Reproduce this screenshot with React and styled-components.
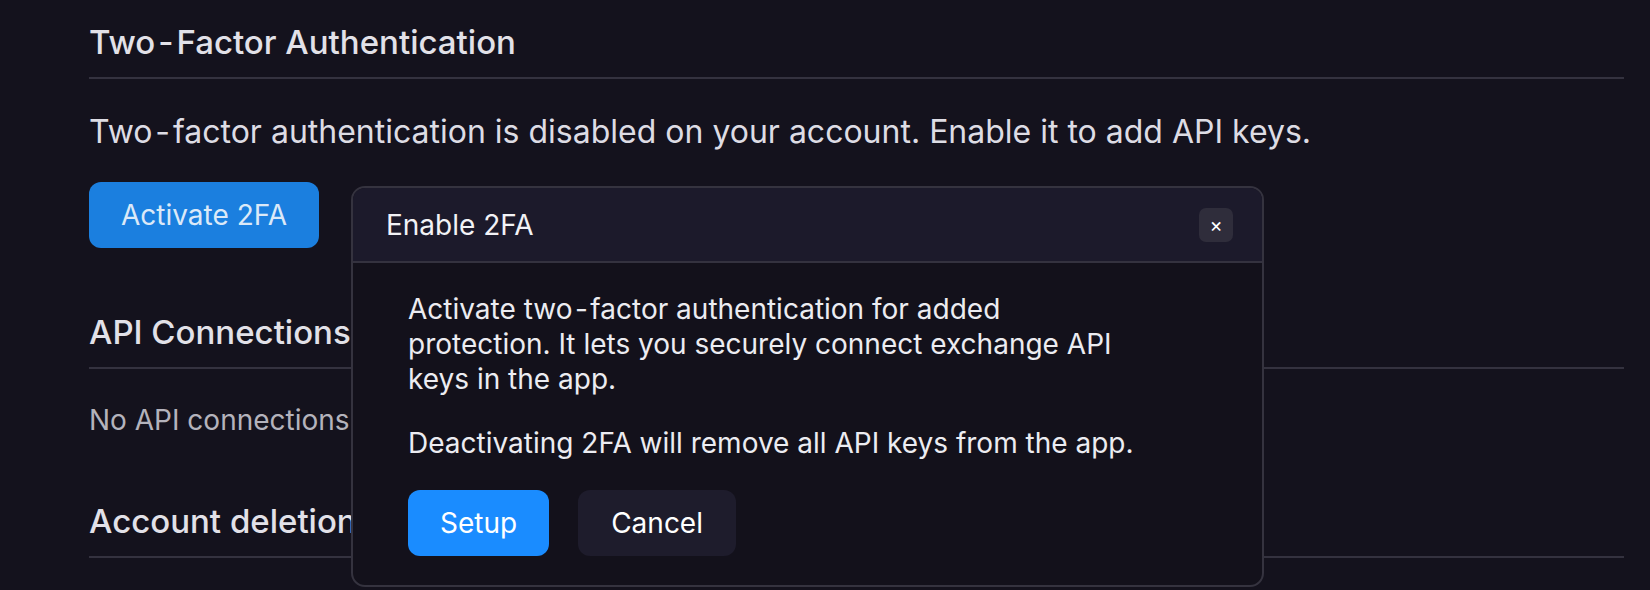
import React from 'react';
import styled, { createGlobalStyle } from 'styled-components';

const GlobalStyle = createGlobalStyle`
  html, body {
    margin: 0;
    background: #14121d;
    font-family: Inter, 'Noto Sans', sans-serif;
    color: #e6e5ec;
  }
  * { box-sizing: border-box; }
`;

const Page = styled.div`
  position: relative;
  height: 590px;
  overflow: hidden;
  padding: 22px 26px 0 89px;
`;

const Section = styled.section`
  margin-bottom: ${(p) => p.$gap || 63}px;
`;

const SectionTitle = styled.h2`
  margin: 0;
  font-size: 33px;
  line-height: 40px;
  font-weight: 500;
  color: #e2e1e8;
`;

const Divider = styled.div`
  height: 2px;
  background: #34323f;
  margin: 15px 0 33px;
`;

const Text = styled.p`
  margin: 0;
  font-size: ${(p) => (p.$muted ? 28 : 32)}px;
  line-height: ${(p) => (p.$muted ? 36 : 40)}px;
  color: ${(p) => (p.$muted ? '#b4b3bc' : '#dddce4')};
`;

// the hyphen sits a little apart from its neighbours in the original
const Hyphen = styled.span`
  padding: 0 0.09em;
`;

const Button = styled.button`
  font-family: inherit;
  font-size: 28px;
  height: ${(p) => p.$h || 66}px;
  padding: 0 ${(p) => p.$px || 30}px;
  border: none;
  border-radius: 12px;
  color: ${(p) => p.$color || '#fff'};
  background: ${(p) => p.$bg};
  cursor: pointer;
`;

const ButtonRow = styled.div`
  margin-top: 30px;
`;

const Modal = styled.div`
  position: absolute;
  left: 351px;
  top: 186px;
  width: 913px;
  height: 401px;
  background: #13111b;
  border: 2px solid #35333f;
  border-radius: 14px;
  overflow: hidden;
`;

const ModalHeader = styled.div`
  display: flex;
  align-items: center;
  justify-content: space-between;
  height: 75px;
  padding: 0 29px 0 33px;
  background: #1c1a2b;
  border-bottom: 2px solid #34323f;
`;

const ModalTitle = styled.h3`
  margin: 0;
  font-size: 28px;
  font-weight: 400;
  color: #f2f2f6;
`;

const CloseButton = styled.button`
  width: 34px;
  height: 34px;
  border: none;
  border-radius: 7px;
  background: #2f2d3b;
  color: #fff;
  font-family: inherit;
  font-size: 20px;
  line-height: 1;
  padding: 0;
  display: flex;
  align-items: center;
  justify-content: center;
`;

const ModalBody = styled.div`
  padding: 29px 36px 0 55px;
`;

const ModalText = styled.p`
  margin: 0 0 29px;
  max-width: 728px;
  font-size: 28px;
  line-height: 35px;
  color: #ececf1;
`;

const Actions = styled.div`
  display: flex;
  gap: 29px;
`;

export default function App() {
  return (
    <>
      <GlobalStyle />
      <Page>
        <Section $gap={64}>
          <SectionTitle>
            Two<Hyphen>-</Hyphen>Factor Authentication
          </SectionTitle>
          <Divider />
          <Text>
            Two<Hyphen>-</Hyphen>factor authentication is disabled on your account. Enable it to add API keys.
          </Text>
          <ButtonRow>
            <Button $bg="#1b7fdf" $color="#dbe9f8" $px={32}>Activate 2FA</Button>
          </ButtonRow>
        </Section>
        <Section>
          <SectionTitle>API Connections</SectionTitle>
          <Divider />
          <Text $muted>No API connections</Text>
        </Section>
        <Section>
          <SectionTitle>Account deletion</SectionTitle>
          <Divider />
        </Section>

        <Modal>
          <ModalHeader>
            <ModalTitle>Enable 2FA</ModalTitle>
            <CloseButton aria-label="Close">×</CloseButton>
          </ModalHeader>
          <ModalBody>
            <ModalText>
              Activate two<Hyphen>-</Hyphen>factor authentication for added protection. It lets you securely connect exchange API keys in the app.
            </ModalText>
            <ModalText>Deactivating 2FA will remove all API keys from the app.</ModalText>
            <Actions>
              <Button $bg="#1a8cff" $px={32}>Setup</Button>
              <Button $bg="#1e1c2c" $px={33}>Cancel</Button>
            </Actions>
          </ModalBody>
        </Modal>
      </Page>
    </>
  );
}
